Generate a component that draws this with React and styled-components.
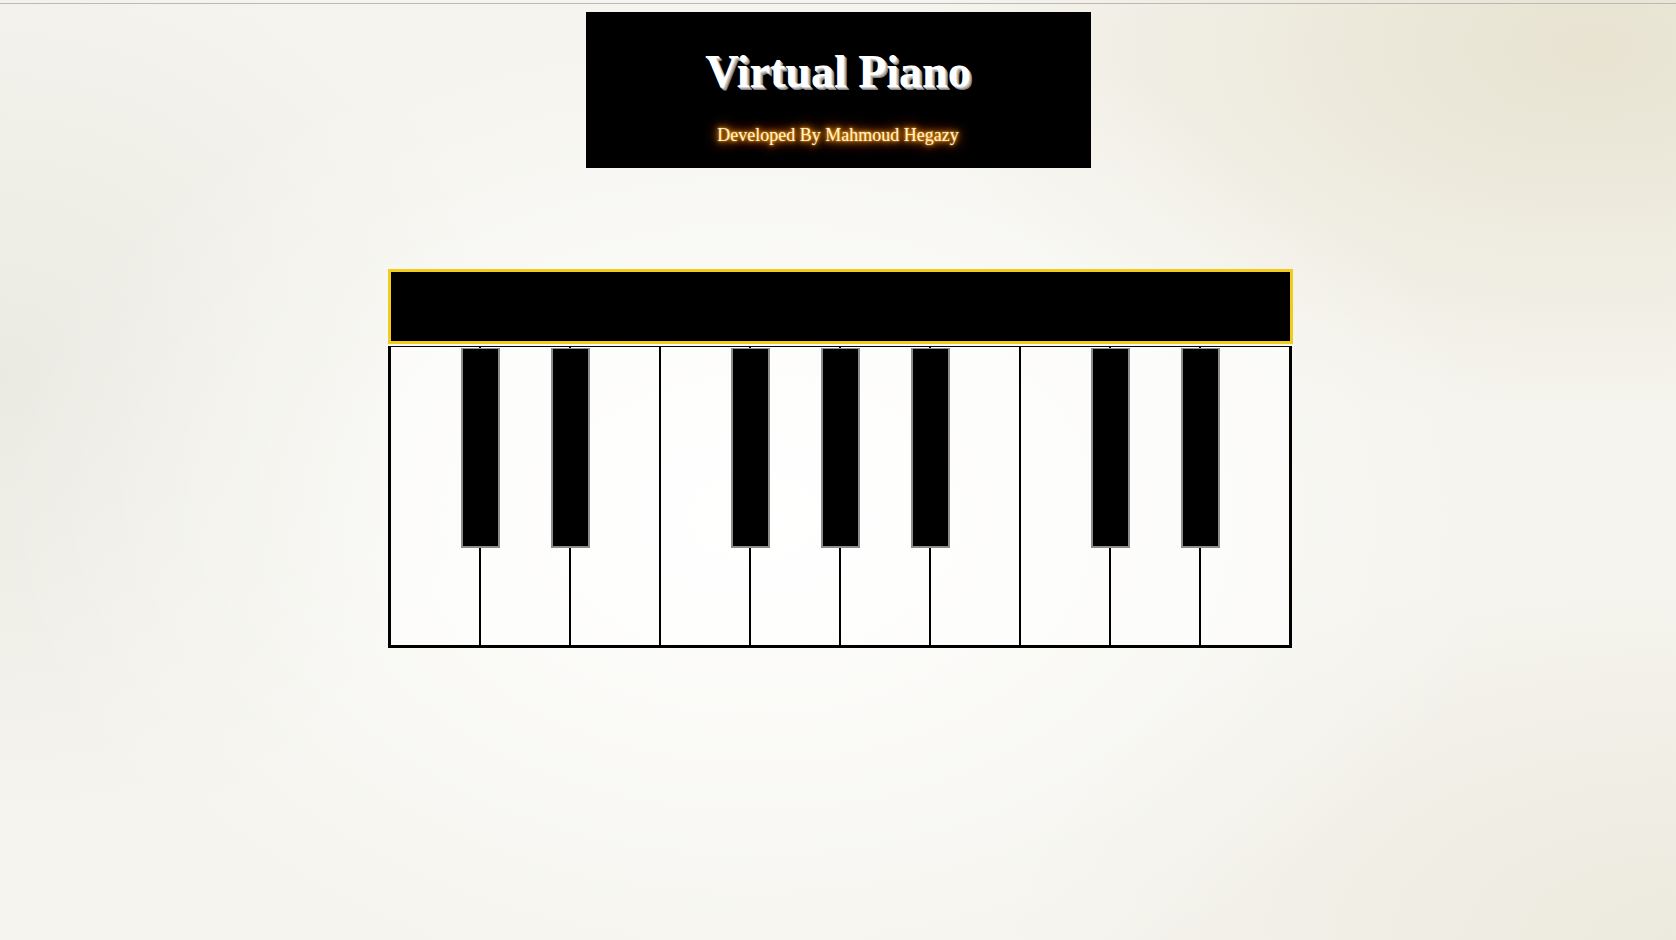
import React from "react";
import styled, { createGlobalStyle } from "styled-components";

const GlobalStyle = createGlobalStyle`
  html, body {
    margin: 0;
    padding: 0;
    min-height: 100%;
  }
  body {
    font-family: "Liberation Serif", "Times New Roman", serif;
    background-color: #f5f4ee;
    background-image:
      radial-gradient(ellipse 45% 55% at 45% 55%, rgba(255,255,255,0.95) 0%, rgba(255,255,255,0) 100%),
      radial-gradient(ellipse 40% 40% at 95% 5%, rgba(230,225,206,0.9) 0%, rgba(230,225,206,0) 100%),
      radial-gradient(ellipse 30% 50% at 0% 40%, rgba(234,233,225,0.9) 0%, rgba(234,233,225,0) 100%),
      radial-gradient(ellipse 40% 40% at 100% 100%, rgba(234,231,218,0.8) 0%, rgba(234,231,218,0) 100%);
    min-height: 940px;
  }
`;

const Page = styled.div`
  min-height: 940px;
  display: flex;
  flex-direction: column;
  align-items: center;
`;

const TopRule = styled.div`
  align-self: stretch;
  height: 1px;
  margin-top: 3px;
  background: #b9b9b9;
`;

const Header = styled.header`
  box-sizing: border-box;
  width: 505px;
  height: 156px;
  margin-top: 8px;
  padding-top: 34px;
  background: #000;
  display: flex;
  flex-direction: column;
  align-items: center;
`;

const Title = styled.h1`
  margin: 0;
  font-size: 46px;
  font-weight: bold;
  line-height: 52px;
  color: #fff;
  text-shadow: 1px 1px 0 #d4d4d4, 2px 2px 0 #acacac, 3px 3px 0 #808080,
    4px 4px 2px rgba(0, 0, 0, 0.4);
`;

const Credit = styled.p`
  margin: 27px 0 0;
  font-size: 18px;
  line-height: 21px;
  color: #fff3d2;
  text-shadow: 0 0 2px #ffb02e, 0 0 5px #ff9a00, 0 0 9px #ff8a00,
    0 0 14px #d86a00, 0 0 20px #a84f00;
`;

const Piano = styled.section`
  width: 905px;
  margin-top: 101px;
  margin-left: 5px;
  display: flex;
  flex-direction: column;
  gap: 2px;
`;

const Display = styled.div`
  box-sizing: border-box;
  height: 75px;
  background: #000;
  border: 3px solid #f2cc1c;
`;

const Keyboard = styled.div`
  box-sizing: border-box;
  width: 904px;
  height: 302px;
  display: flex;
  border: 3px solid #000;
  border-top-width: 1px;
`;

const WhiteKey = styled.div`
  position: relative;
  flex: 1;
  background: rgba(255, 255, 255, 0.55);
  border-right: ${(p) => (p.$last ? "none" : "2px solid #000")};
`;

const BlackKey = styled.div`
  position: absolute;
  z-index: 1;
  top: 1px;
  right: -21px;
  box-sizing: border-box;
  width: 39px;
  height: 200px;
  background: #000;
  border: 2px solid #8c8c8c;
  border-top-width: 1px;
`;

// which white keys carry a sharp on their right edge
const keys = [
  { note: "C", sharp: true },
  { note: "D", sharp: true },
  { note: "E", sharp: false },
  { note: "F", sharp: true },
  { note: "G", sharp: true },
  { note: "A", sharp: true },
  { note: "B", sharp: false },
  { note: "C2", sharp: true },
  { note: "D2", sharp: true },
  { note: "E2", sharp: false },
];

export default function App() {
  return (
    <>
      <GlobalStyle />
      <Page>
        <TopRule />
        <Header>
          <Title>Virtual Piano</Title>
          <Credit>Developed By Mahmoud Hegazy</Credit>
        </Header>
        <Piano>
          <Display />
          <Keyboard>
            {keys.map((k, i) => (
              <WhiteKey key={k.note} $last={i === keys.length - 1}>
                {k.sharp && <BlackKey />}
              </WhiteKey>
            ))}
          </Keyboard>
        </Piano>
      </Page>
    </>
  );
}
